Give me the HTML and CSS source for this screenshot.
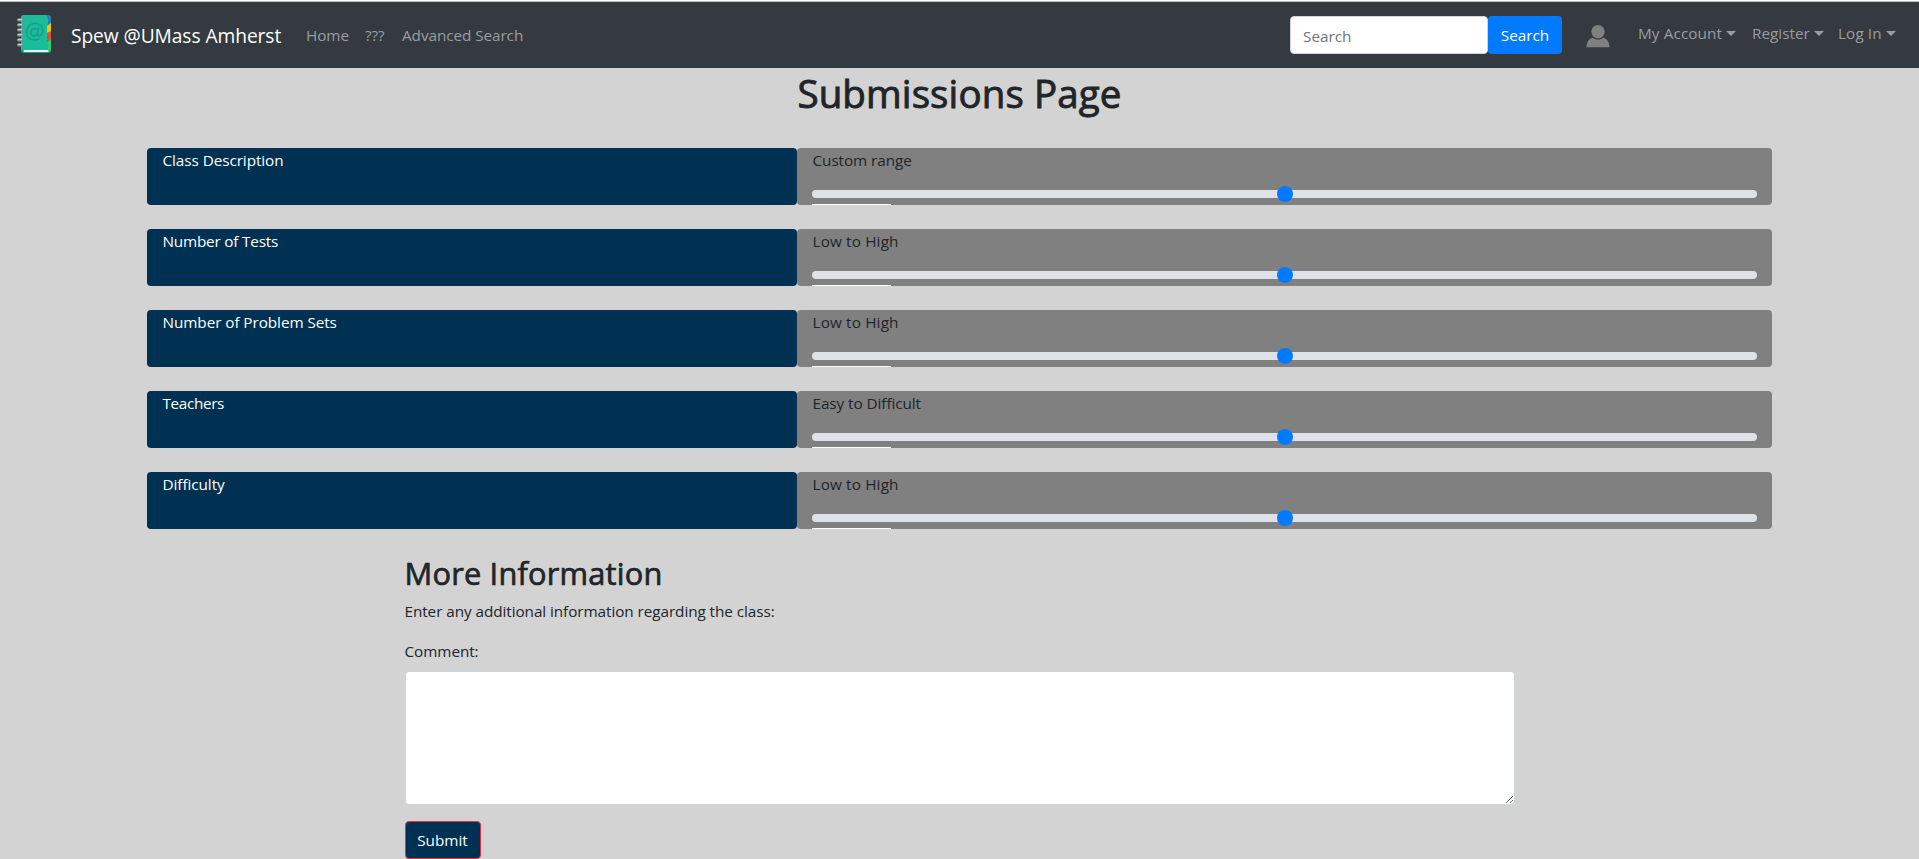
FILE: index.html
```html
<!DOCTYPE html>
<html lang="en">
<head>
<meta charset="utf-8">
<title>Submissions Page</title>
<link rel="stylesheet" href="styles.css">
</head>
<body>
<nav class="navbar">
  <svg class="logo" width="36" height="40" viewBox="0 0 36 40">
    <rect x="4" y="1" width="30" height="38" rx="3" fill="#16a085"/>
    <path d="M29 1h2a3 3 0 0 1 3 3v6h-4z" fill="#2980ba"/>
    <path d="M30 12l4-3v9l-4 1z" fill="#f1c40f"/>
    <path d="M30 19l4-2v8l-3 2z" fill="#e74c3c"/>
    <path d="M30 28l4-3v11a3 3 0 0 1-3 2z" fill="#2ecc71"/>
    <path d="M7 1h22q2 2 2 7l-1 4v14l1 10H4V4a3 3 0 0 1 3-3z" fill="#1abc9c"/>
    <path d="M7.500 37h23" stroke="#ecf0f1" stroke-width="2" stroke-linecap="round"/>
    <path d="M21.500 14l-1 6c-.3 3 5.500 2 5.500-3 0-5-3.500-7.500-8-7.500-5 0-8.500 3.500-8.500 8.500s3.500 8 8.500 8c2 0 3 0 4.500-1M21 17.500c0-4.500-7-3.500-7 1.500 0 4 6 4 6.500-.5" fill="none" stroke="#16a085" stroke-width="1.700"/>
    <path d="M1.500 6h3M1.500 11h3M1.500 16h3M1.500 21h3M1.500 26h3M1.500 31h3" stroke="#7f8c8d" stroke-width="3" stroke-linecap="round"/>
    <path d="M1.500 5.500h3M1.500 10.500h3M1.500 15.500h3M1.500 20.500h3M1.500 25.500h3M1.500 30.500h3" stroke="#c8cfd1" stroke-width="1.500" stroke-linecap="round"/>
  </svg>
  <a class="brand">Spew @UMass Amherst</a>
  <a class="link home">Home</a>
  <a class="link marks">???</a>
  <a class="link advanced">Advanced Search</a>
  <form class="search">
    <input class="search-input" type="text" placeholder="Search">
    <button class="search-button" type="button">Search</button>
  </form>
  <svg class="user" width="24" height="23" viewBox="0 0 24 23" fill="#808080">
    <circle cx="12" cy="6.800" r="6.700"/>
    <path d="M.5 22.300C.5 17 3 14 6.500 12.500c3 2.700 8 2.700 11 0C21 14 23.500 17 23.500 22.300z"/>
  </svg>
  <div class="account">
    <a class="menu my-account">My Account</a>
    <a class="menu register">Register</a>
    <a class="menu log-in">Log In</a>
  </div>
</nav>
<h1 class="title">Submissions Page</h1>
<main class="rows">
  <section class="row"><div class="name">Class Description</div><div class="range"><label>Custom range</label><div class="track"><i class="thumb"></i></div><div class="edge"></div></div></section>
  <section class="row"><div class="name tight">Number of Tests</div><div class="range"><label class="loose">Low to High</label><div class="track"><i class="thumb"></i></div><div class="edge"></div></div></section>
  <section class="row"><div class="name">Number of Problem Sets</div><div class="range"><label class="loose">Low to High</label><div class="track"><i class="thumb"></i></div><div class="edge"></div></div></section>
  <section class="row"><div class="name tighter">Teachers</div><div class="range"><label>Easy to Difficult</label><div class="track"><i class="thumb"></i></div><div class="edge"></div></div></section>
  <section class="row"><div class="name">Difficulty</div><div class="range"><label class="loose">Low to High</label><div class="track"><i class="thumb"></i></div><div class="edge"></div></div></section>
</main>
<section class="more">
  <h2 class="subtitle">More Information</h2>
  <p class="hint">Enter any additional information regarding the class:</p>
  <label class="comment-label" for="comment">Comment:</label>
  <textarea class="comment" id="comment"></textarea>
  <button class="submit" type="button">Submit</button>
</section>
</body>
</html>
```
FILE: styles.css
```css
* { box-sizing: border-box; }
body {
  margin: 0;
  height: 859px;
  overflow: hidden;
  border-top: 1px solid #fff;
  background: #d3d3d3;
  color: #212529;
  font: 15.3px/24px "Open Sans", "Noto Sans", sans-serif;
  letter-spacing: -0.070px;
}
.navbar {
  display: flex;
  align-items: flex-start;
  height: 67px;
  border-top: 1px solid #b9bcbe;
  background: #343a40;
  white-space: nowrap;
}
.logo { flex: none; margin: 12px 18px 0 17px; overflow: visible; }
.brand { width: 235px; margin-top: 19px; font-size: 19.2px; line-height: 30px; color: #fff; }
.link { margin-top: 21px; color: #9a9da0; }
.home { width: 59px; }
.marks { width: 37px; }
.search { display: flex; margin: 14px 0 0 auto; }
.search-input {
  width: 198px;
  height: 38px;
  padding: 2px 12px 0;
  border: 1px solid #ced4da;
  border-radius: 4px;
  font: inherit;
}
.search-input::placeholder { color: #6c757d; opacity: 1; }
.search-button {
  width: 74px;
  height: 38px;
  padding: 0;
  border: 0;
  border-radius: 4px;
  background: #007bff;
  color: #fff;
  font: inherit;
}
.user { flex: none; margin: 23px 28px 0 24px; }
.account { display: flex; width: 281px; margin-top: 19px; }
.menu { display: flex; align-items: flex-start; color: #9a9da0; letter-spacing: 0.100px; }
.menu::after {
  content: "";
  margin: 10px 0 0 4px;
  border: 5px solid transparent;
  border-top-color: #9a9da0;
  border-bottom: 0;
}
.my-account { width: 114px; }
.register { width: 86px; letter-spacing: 0; }
.title {
  margin: 0;
  padding-top: 1px;
  height: 80px;
  text-align: center;
  font-size: 38.500px;
  line-height: 48px;
  font-weight: 500;
  letter-spacing: 0.120px;
  -webkit-text-stroke: 0.900px #212529;
}
.rows { display: grid; gap: 24px; width: 1625px; margin: 0 auto; }
.row { display: grid; grid-template-columns: 650px 975px; height: 57px; }
.name { padding: 0 15.500px; border-radius: 4px; background: #003153; color: #fff; }
.tight { letter-spacing: -0.200px; }
.tighter { letter-spacing: -0.350px; }
.range { padding: 0 15px; border-radius: 4px; background: #808080; }
.range label { display: block; height: 42px; padding-left: 0.500px; }
.range .loose { letter-spacing: 0.150px; }
.track {
  display: flex;
  align-items: center;
  justify-content: center;
  height: 8px;
  border-radius: 4px;
  background: #dee2e6;
}
.thumb { width: 16px; height: 16px; flex: none; border-radius: 50%; background: #007bff; }
.edge { width: 79px; height: 1px; margin-top: 6px; background: #fff; }
.more { display: flex; flex-direction: column; align-items: flex-start; width: 1110px; margin: 24px auto 0; }
.subtitle {
  margin: 0;
  height: 46px;
  font-size: 30.800px;
  line-height: 40px;
  font-weight: 500;
  letter-spacing: 0.200px;
  -webkit-text-stroke: 0.700px #212529;
}
.hint { margin: 0 0 16px; }
.comment { display: block; width: 1110px; height: 134px; margin: 8px 0 16px; border: 1px solid #ced4da; border-radius: 4px; background: #fff; }
.submit {
  width: 76px;
  height: 38px;
  padding: 0;
  border: 1px solid #dc3545;
  border-radius: 4px;
  background: #003153;
  color: #fff;
  font: inherit;
}
```
